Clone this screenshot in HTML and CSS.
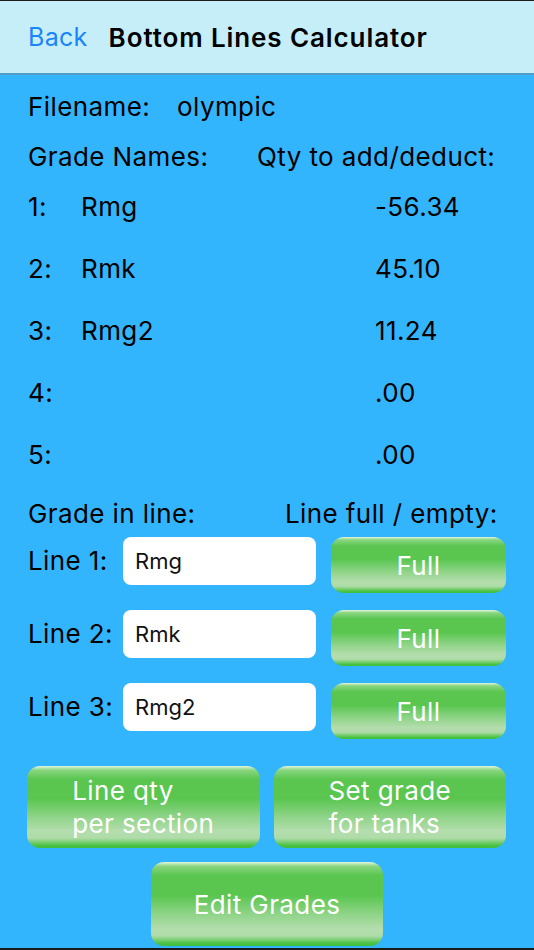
FILE: index.html
```html
<!DOCTYPE html>
<html lang="en">
<head>
<meta charset="UTF-8">
<meta name="viewport" content="width=device-width, initial-scale=1.0">
<title>Bottom Lines Calculator</title>
<link rel="stylesheet" href="styles.css">
</head>
<body>

<div class="screen">
    <header class="navbar">
        <a class="back" href="#">Back</a>
        <h1>Bottom Lines Calculator</h1>
    </header>

    <main class="content">
        <div class="row file-row">
            <span>Filename:</span>
            <span class="filename">olympic</span>
        </div>

        <div class="row heads">
            <span class="grade-head">Grade Names:</span>
            <span>Qty to add/deduct:</span>
        </div>

        <div class="grades">
            <div class="row grade"><span class="num">1:</span><span class="name">Rmg</span><span class="qty">-56.34</span></div>
            <div class="row grade"><span class="num">2:</span><span class="name">Rmk</span><span class="qty">45.10</span></div>
            <div class="row grade"><span class="num">3:</span><span class="name">Rmg2</span><span class="qty">11.24</span></div>
            <div class="row grade"><span class="num">4:</span><span class="name"></span><span class="qty">.00</span></div>
            <div class="row grade"><span class="num">5:</span><span class="name"></span><span class="qty">.00</span></div>
        </div>

        <div class="row heads lines-head">
            <span class="line-head">Grade in line:</span>
            <span>Line full / empty:</span>
        </div>

        <div class="lines">
            <div class="line">
                <label for="line1">Line 1:</label>
                <input type="text" id="line1" value="Rmg">
                <button class="btn full">Full</button>
            </div>
            <div class="line">
                <label for="line2">Line 2:</label>
                <input type="text" id="line2" value="Rmk">
                <button class="btn full">Full</button>
            </div>
            <div class="line">
                <label for="line3">Line 3:</label>
                <input type="text" id="line3" value="Rmg2">
                <button class="btn full">Full</button>
            </div>
        </div>

        <div class="actions">
            <button class="btn big"><span>Line qty<br>per section</span></button>
            <button class="btn big"><span>Set grade<br>for tanks</span></button>
        </div>

        <div class="edit">
            <button class="btn big">Edit Grades</button>
        </div>
    </main>
</div>

</body>
</html>
```

FILE: styles.css
```css
body {
    margin: 0;
    font-family: Inter, "Noto Sans", sans-serif;
    background-color: #1a1a1a;
}

.screen {
    width: 534px;
    height: 947px;
    margin-top: 1px;
    background-color: #33b5fd;
    overflow: hidden;
}

.navbar {
    height: 72px;
    background-color: #c6eef8;
    border-bottom: 2px solid #4f9dc4;
    display: flex;
    align-items: center;
    padding: 0 28px;
    gap: 21px;
}

.back {
    color: #1a84fb;
    font-size: 25px;
    letter-spacing: 0.3px;
    text-decoration: none;
}

.navbar h1 {
    margin: 0;
    font-size: 26px;
    font-weight: 600;
    letter-spacing: 0.9px;
    color: #000;
}

.content {
    padding: 11px 28px 0 28px;
    color: #000;
    font-size: 26px;
    letter-spacing: 0.4px;
}

.row {
    height: 40px;
    display: flex;
    align-items: center;
    white-space: nowrap;
}

.file-row .filename {
    margin-left: 27px;
}

.heads {
    margin-top: 10px;
}

.grade-head {
    width: 229px;
}

.line-head {
    width: 257px;
}

.grades {
    margin-top: 10px;
}

.grade + .grade {
    margin-top: 22px;
}

.grade .num {
    width: 53px;
}

.grade .name {
    width: 294px;
}

.lines-head {
    margin-top: 19px;
}

.lines {
    margin-top: 4px;
}

.line {
    height: 56px;
    display: flex;
    align-items: flex-start;
}

.line > * {
    flex: none;
}

.line + .line {
    margin-top: 17px;
}

.line label {
    width: 95px;
    line-height: 48px;
    white-space: nowrap;
}

.line input {
    width: 193px;
    height: 48px;
    box-sizing: border-box;
    border: none;
    border-radius: 8px;
    background-color: #fff;
    padding: 0 12px;
    font-family: inherit;
    font-size: 22px;
    color: #111;
    outline: none;
}

/* glossy green buttons */
.btn {
    border: none;
    border-radius: 13px;
    color: #fff;
    font-family: inherit;
    font-size: 26px;
    letter-spacing: 0.4px;
    cursor: pointer;
    background: linear-gradient(to bottom,
        #e3f6df 0%,
        #8ad680 5%,
        #5ac650 16%,
        #5ac650 40%,
        #8fd488 62%,
        #b4ddae 80%,
        #aedca7 88%,
        #4ac243 97%,
        #3fbe38 100%);
}

.btn.full {
    width: 175px;
    height: 56px;
    margin-left: 15px;
    padding: 0;
}

.actions {
    margin-top: 27px;
    display: flex;
    gap: 14px;
    margin-left: -1px;
}

.actions .btn {
    width: 233px;
    height: 82px;
    padding: 0;
    line-height: 33px;
}

.actions .btn span {
    display: inline-block;
    text-align: left;
}

.edit {
    margin-top: 14px;
    display: flex;
    justify-content: center;
}

.edit .btn {
    width: 232px;
    height: 84px;
}
```
